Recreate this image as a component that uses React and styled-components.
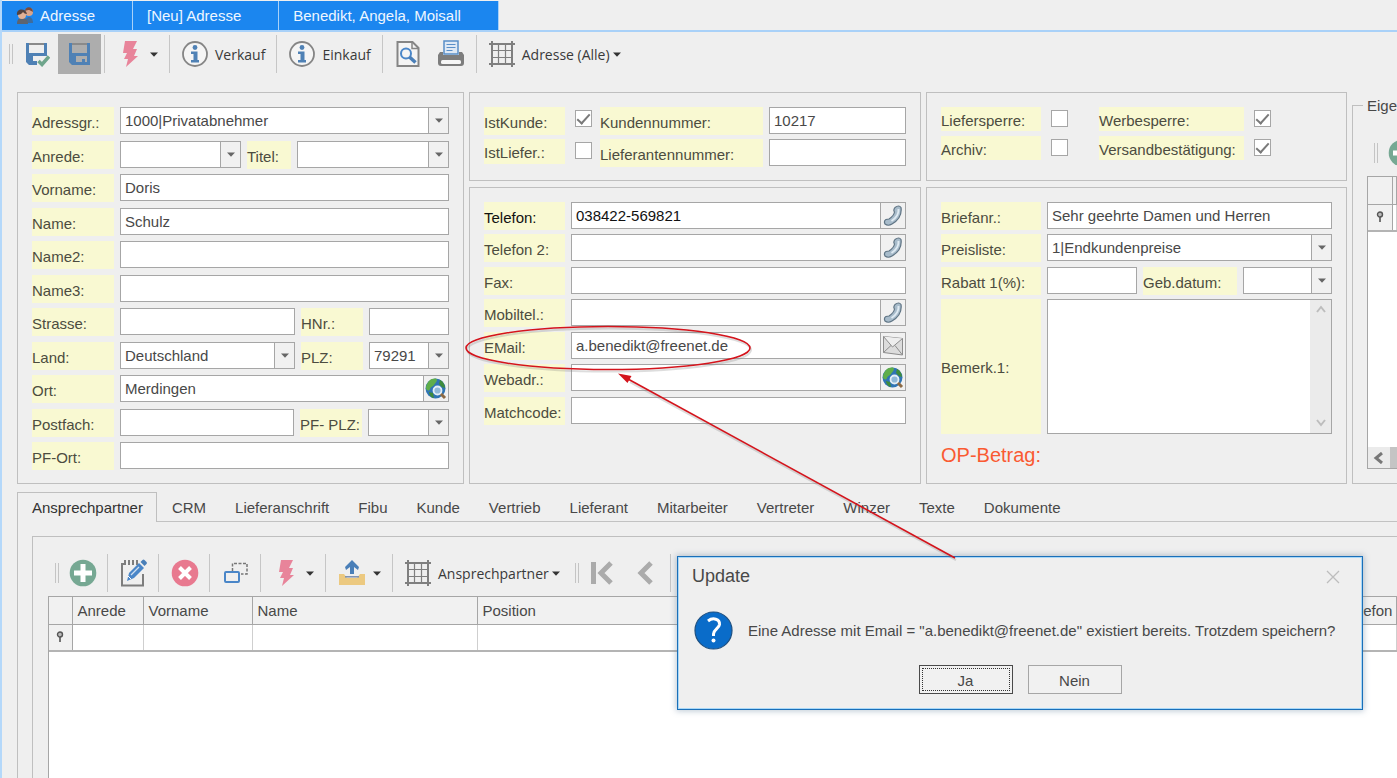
import { useState } from 'react';
import styled, { createGlobalStyle, css } from 'styled-components';

const GlobalStyle = createGlobalStyle`
  * {
    box-sizing: border-box;
  }

  body {
    margin: 0;
    background: #efefef;
    color: #484848;
    font-family: 'Liberation Sans', Arial, sans-serif;
    font-size: 15px;
    overflow: hidden;
  }

  button,
  input,
  select,
  textarea {
    font: inherit;
    color: inherit;
  }
`;

const Page = styled.div`
  position: relative;
  display: flex;
  flex-direction: column;
  min-height: 100vh;
  padding-top: 1px;
  border-left: 2px solid #b4d8fa;
  overflow: hidden;
`;

/* window tabs */

const WindowTabs = styled.nav`
  display: flex;
  gap: 1px;
  height: 31px;
  border-bottom: 2px solid #a9d1f8;
`;

const WindowTab = styled.button`
  display: flex;
  align-items: center;
  gap: 6px;
  padding: 0 37px 0 14px;
  border: 0;
  background: #1b86ef;
  box-shadow: 1px 0 0 #a9d1f8;
  color: #eef6ff;
  white-space: nowrap;
`;

/* toolbars */

const Toolbar = styled.div`
  display: flex;
  align-items: center;
  padding-left: 7px;
  font-family: 'Open Sans', 'Noto Sans', sans-serif;
  font-size: 14px;
  color: #3a3a3a;
`;

const MainToolbar = styled(Toolbar)`
  padding-top: 2px;
  margin-bottom: 18px;
`;

const Grip = styled.span`
  width: 4px;
  height: 20px;
  margin-right: 2px;
  margin-left: ${(props) => (props.$inner ? '7px' : '0')};
  border-left: 1px solid #c4c4c4;
  border-right: 1px solid #c4c4c4;
  flex: none;
`;

const Separator = styled.span`
  width: 1px;
  height: 38px;
  margin: 0 4px 0 3px;
  background: #c6c6c6;
  flex: none;
`;

const ToolButton = styled.button`
  display: flex;
  align-items: center;
  gap: 7px;
  height: 40px;
  padding: 0 8px;
  border: 0;
  background: transparent;
  white-space: nowrap;
  flex: none;
`;

const IconButton = styled(ToolButton)`
  justify-content: center;
  width: 43px;
  padding: 0;
  background: ${(props) => (props.$active ? '#adadad' : 'transparent')};
`;

const MenuText = styled.span`
  display: flex;
  align-items: center;
  gap: 3px;
`;

/* form */

const FormArea = styled.form`
  display: grid;
  grid-template-columns: minmax(0, 447fr) minmax(0, 452fr) minmax(0, 421fr) minmax(0, 45fr);
  column-gap: 5px;
  padding-left: 15px;
`;

const Column = styled.div`
  display: flex;
  flex-direction: column;
  gap: 6px;
`;

const Panel = styled.section`
  padding: 14px;
  border: 1px solid #bfbfbf;
  flex: ${(props) => (props.$grow ? '1' : 'none')};
`;

const Rows = styled.div`
  display: grid;
  grid-template-columns: minmax(0, 1fr);
  grid-template-rows: ${(props) => props.$rows};
`;

const Row = styled.div`
  display: flex;
  align-items: flex-start;
  gap: 6px;
`;

const Label = styled.label`
  display: flex;
  align-items: center;
  width: ${(props) => props.$width}px;
  height: ${(props) => props.$height || 28}px;
  padding-top: 2px;
  margin-left: ${(props) => (props.$apart ? '23px' : '0')};
  background: #f9f9d2;
  color: ${(props) => (props.$strong ? '#111' : '#4c4c40')};
  white-space: nowrap;
  flex: none;
`;

const fieldBox = css`
  height: 27px;
  border: 1px solid #a6a6a6;
  background: #fff;
  min-width: 0;
  flex: ${(props) => (props.$width ? `0 0 ${props.$width}px` : '1')};
`;

const TextField = styled.input`
  ${fieldBox}
  padding: 0 4px;
  border-radius: 0;
  outline: 0;
`;

const Combo = styled.div`
  ${fieldBox}
  position: relative;
  display: flex;
`;

const ComboSelect = styled.select`
  flex: 1;
  min-width: 0;
  padding: 0 21px 0 4px;
  border: 0;
  border-radius: 0;
  background: #fff;
  appearance: none;
  outline: 0;
`;

const ComboArrow = styled.span`
  position: absolute;
  top: 0;
  right: 0;
  bottom: 0;
  display: flex;
  align-items: center;
  justify-content: center;
  width: 20px;
  border-left: 1px solid #a6a6a6;
  background: #f1f1f1;
  pointer-events: none;
`;

const ButtonField = styled.div`
  ${fieldBox}
  display: flex;
  color: ${(props) => (props.$strong ? '#111' : 'inherit')};
`;

const BareInput = styled.input`
  flex: 1;
  min-width: 0;
  padding: 0 4px;
  border: 0;
  background: transparent;
  outline: 0;
`;

const FieldButton = styled.button`
  display: flex;
  align-items: center;
  justify-content: center;
  width: 25px;
  padding: 0;
  border: 0;
  border-left: 1px solid #a6a6a6;
  background: #f1f1f1;
`;

const CheckBox = styled.input.attrs({ type: 'checkbox' })`
  appearance: none;
  display: flex;
  justify-content: center;
  width: 17px;
  height: 17px;
  margin: 3px 2px 0 4px;
  border: 1px solid #a6a6a6;
  background: #fff;
  flex: none;

  &:checked::after {
    content: '';
    width: 5px;
    height: 11px;
    border: solid #7a7a7a;
    border-width: 0 2px 2px 0;
    transform: rotate(42deg);
  }
`;

const MemoBox = styled.div`
  display: flex;
  flex: 1;
  height: 135px;
  border: 1px solid #a6a6a6;
  background: #fff;
`;

const MemoText = styled.textarea`
  flex: 1;
  min-width: 0;
  padding: 4px;
  border: 0;
  outline: 0;
  resize: none;
`;

const MemoScroll = styled.div`
  display: flex;
  flex-direction: column;
  justify-content: space-between;
  align-items: center;
  width: 21px;
  padding: 4px 0;
  background: #ebebeb;
`;

const OpenAmount = styled.p`
  margin: 9px 0 0;
  color: #fa5a32;
  font-size: 20px;
  line-height: 24px;
`;

/* clipped group on the right */

const Group = styled.fieldset`
  display: flex;
  flex-direction: column;
  min-width: 0;
  margin: 5px 0 0;
  padding: 0 0 14px 14px;
  border: 1px solid #bfbfbf;
  border-right: 0;
  overflow: hidden;
`;

const GroupTitle = styled.legend`
  margin-left: -4px;
  padding: 0 0 0 4px;
  line-height: 17px;
`;

const GroupToolbar = styled(Toolbar)`
  margin: 19px 0 3px;
`;

const GroupGrid = styled.div`
  display: flex;
  flex-direction: column;
  flex: 1;
  border: 1px solid #a6a6a6;
  border-right: 0;
  background: #fff;
`;

const ScrollBar = styled.div`
  display: flex;
  height: 21px;
  margin-top: auto;
  background: #c4c4c4;
`;

const ScrollArrow = styled.span`
  display: flex;
  align-items: center;
  justify-content: center;
  width: 22px;
  background: #ebebeb;
`;

/* lower part */

const TabStrip = styled.div`
  display: flex;
  height: 30px;
  margin: 8px 0 0 15px;
  border-bottom: 1px solid #c2c2c2;
`;

const Tab = styled.button`
  padding: 0 13px 0 14px;
  margin-bottom: -1px;
  border: 1px solid transparent;
  border-bottom: 0;
  background: transparent;
  white-space: nowrap;
  flex: none;

  ${(props) =>
    props.$active &&
    css`
      border-color: #bfbfbf;
      background: #efefef;
      color: #333;
    `}
`;

const TabBody = styled.div`
  display: flex;
  flex: 1;
  margin-left: 15px;
  padding: 14px 0 0 14px;
  border-left: 1px solid #bfbfbf;
`;

const ListPanel = styled.section`
  display: flex;
  flex-direction: column;
  flex: 1;
  min-width: 0;
  padding: 16px 0 0 15px;
  border: 1px solid #bfbfbf;
  border-width: 1px 0 0 1px;
`;

const GridArea = styled.div`
  flex: 1;
  margin-top: 3px;
  border: 1px solid #a6a6a6;
  border-width: 1px 0 0 1px;
  background: #fff;
`;

const Grid = styled.table`
  width: 100%;
  border-collapse: collapse;
  table-layout: fixed;

  th,
  td {
    height: 27px;
    padding: 0 5px;
    text-align: left;
    font-weight: normal;
    white-space: nowrap;
  }

  thead th {
    border-right: 1px solid #a6a6a6;
    border-bottom: 1px solid #a6a6a6;
    background: #f1f1f1;
  }

  tbody td {
    border-right: 1px solid #cfcfcf;
    border-bottom: 2px solid #b4b4b4;
  }

  tbody th {
    padding: 0;
    border-right: 1px solid #a6a6a6;
    border-bottom: 2px solid #b4b4b4;
    background: #f1f1f1;
    text-align: center;
  }

  tbody svg {
    display: block;
    margin: 0 auto;
  }
`;

/* message box */

const Dialog = styled.div`
  position: absolute;
  top: 556px;
  right: 34px;
  display: flex;
  flex-direction: column;
  width: 686px;
  padding: 0 14px 15px;
  border: 1px solid #1a6fb8;
  background: #efefef;
  box-shadow: inset 0 0 0 1px #a8d8f8, 0 0 6px 1px rgba(90, 120, 150, 0.4);
`;

const DialogHead = styled.header`
  display: flex;
  align-items: center;
  justify-content: space-between;
  height: 39px;
`;

const DialogTitle = styled.h2`
  margin: 0;
  font-size: 18px;
  font-weight: normal;
`;

const CloseButton = styled.button`
  display: flex;
  padding: 0 8px;
  border: 0;
  background: transparent;
`;

const DialogText = styled.div`
  display: flex;
  align-items: center;
  gap: 15px;
  height: 69px;
  padding-left: 2px;
  white-space: nowrap;
`;

const DialogButtons = styled.div`
  display: flex;
  justify-content: center;
  gap: 15px;
`;

const DialogButton = styled.button`
  width: 94px;
  height: 29px;
  padding: 2px 0 0;
  border: 1px solid ${(props) => (props.$focused ? '#4a4a4a' : '#a6a6a6')};
  background: #f1f1f1;
  outline: ${(props) => (props.$focused ? '1px dotted #333' : '0')};
  outline-offset: -4px;
`;

const Marks = styled.svg`
  position: absolute;
  top: 0;
  left: -2px;
  pointer-events: none;
`;

/* icons */

function Caret({ color = '#333' }) {
    return (
        <svg width="8" height="5" viewBox="0 0 8 5">
            <path d="M0 0.500h8L4 4.800z" fill={color} />
        </svg>
    );
}

function Chevron({ dir }) {
    const paths = {
        up: 'M2 8l4-5 4 5',
        down: 'M2 3l4 5 4-5',
        left: 'M9 1L3 6l6 5',
    };
    return (
        <svg width="12" height="12" viewBox="0 0 12 12" fill="none">
            <path d={paths[dir]} stroke={dir === 'left' ? '#777' : '#bdbdbd'} strokeWidth={dir === 'left' ? 3 : 2} />
        </svg>
    );
}

function PeopleIcon() {
    return (
        <svg width="18" height="18" viewBox="0 0 18 18">
            <path d="M9 16c0-4 2-6 4-6s4 2 4 6z" fill="#3f6c9c" />
            <circle cx="13" cy="5" r="4" fill="#d9a58c" />
            <path d="M9 4c0-5 8-5 8 1-2-1-3-2-4-2s-2 0-4 1z" fill="#7a4a3a" />
            <path d="M1 17c0-5 2-6 5-6s6 1 6 6z" fill="#5d6470" />
            <circle cx="6" cy="8" r="4" fill="#e2b196" />
            <path d="M1 8c-1-7 9-7 10-1-2 0-3-1-4-2-1 2-4 3-6 3z" fill="#54423f" />
        </svg>
    );
}

function SaveIcon({ checked }) {
    return (
        <svg width="26" height="26" viewBox="0 0 26 26">
            <path d="M2 2h3v10h15V2h3v13H9v9H5l-3-3z" fill="#4f81b5" />
            <path d="M5 3h15" stroke="#8a8a8a" strokeWidth="2" />
            {checked ? (
                <>
                    <path d="M9 20h4v4H9z" fill="#4f81b5" />
                    <path d="M14.500 20l3.500 3.500 7-8" stroke="#6fa58c" strokeWidth="3.500" fill="none" />
                </>
            ) : (
                <path d="M20 14h3v10H9v-3h6v-3h3v3h2z" fill="#4f81b5" />
            )}
        </svg>
    );
}

function FlashIcon() {
    return (
        <svg width="26" height="28" viewBox="0 0 26 28">
            <path d="M8 1h12l-4 8h4l-3 7h4L9 27l2-8H7l3-6H6z" fill="#e8849a" />
        </svg>
    );
}

function InfoIcon() {
    return (
        <svg width="26" height="26" viewBox="0 0 26 26">
            <circle cx="13" cy="13" r="12" fill="#f5f5f5" stroke="#858585" strokeWidth="1.800" />
            <circle cx="13" cy="6.500" r="2.400" fill="#4f81b5" />
            <path d="M9 10.500h6.500V19H17v2.500H9V19h2.500v-6H9z" fill="#4f81b5" />
        </svg>
    );
}

function PreviewIcon() {
    return (
        <svg width="26" height="28" viewBox="0 0 26 28" fill="none">
            <path d="M2.500 2h15l6 6v18h-21z" fill="#f4f4f4" stroke="#858585" strokeWidth="2" />
            <path d="M17 2v6.500h6" stroke="#858585" strokeWidth="1.500" />
            <circle cx="11" cy="13.500" r="5" stroke="#4a86c8" strokeWidth="2" />
            <path d="M14.500 17l6 5.500" stroke="#4a7fb8" strokeWidth="3.500" />
        </svg>
    );
}

function PrinterIcon() {
    return (
        <svg width="28" height="28" viewBox="0 0 28 28">
            <path d="M7 1h14v13H7z" fill="#dfe9f5" stroke="#5a8fc8" strokeWidth="1.500" />
            <path d="M9.500 4.500h9M9.500 7.500h9M9.500 10.500h6" stroke="#5a8fc8" strokeWidth="1.200" />
            <path d="M3 12h3v3h16v-3h3l2 3v8q0 3-3 3H4q-3 0-3-3v-8z" fill="#7d7d7d" />
            <rect x="4" y="20" width="20" height="4" rx="1.500" fill="#f6f6f6" />
        </svg>
    );
}

function GridIcon() {
    return (
        <svg width="26" height="28" viewBox="0 0 26 28" fill="none" stroke="#7f7f7f">
            <path d="M3 1v26M23 1v26M0 4h26M0 24h26" strokeWidth="2" />
            <path d="M9.500 4v20M16.500 4v20M3 10.500h20M3 17.500h20" strokeWidth="1.200" />
        </svg>
    );
}

function RoundIcon({ kind }) {
    const add = kind === 'add';
    return (
        <svg width="28" height="28" viewBox="0 0 28 28">
            <circle cx="14" cy="14" r="13.300" fill={add ? '#76a893' : '#e8798f'} />
            {add ? (
                <path d="M14 5v18M5 14h18" stroke="#fff" strokeWidth="5" />
            ) : (
                <path d="M8.500 8.500l11 11M19.500 8.500l-11 11" stroke="#fff" strokeWidth="4" />
            )}
        </svg>
    );
}

function EditIcon() {
    return (
        <svg width="28" height="28" viewBox="0 0 28 28" fill="none">
            <path d="M5 5H2v21.500h21V15" stroke="#7d7d7d" strokeWidth="2" />
            <path d="M5 1v5M9 1v5M13 1v5M17 1v5" stroke="#7d7d7d" strokeWidth="2" />
            <path d="M9 14L19 4l5 5-10 10-7 3z" fill="#4a86c8" />
            <path d="M20.500 3l2-2q1-1 2 0l2 2q1 1 0 2l-2 2z" fill="#4a7fb8" />
            <path d="M11 16l8-8" stroke="#cfe0f2" strokeWidth="1.300" />
            <path d="M8 17l3 3" stroke="#fff" strokeWidth="1" />
        </svg>
    );
}

function CopyIcon() {
    return (
        <svg width="26" height="24" viewBox="0 0 26 24" fill="none">
            <path d="M9.500 10V2.500H24V13h-6" stroke="#777" strokeWidth="1.500" strokeDasharray="3 1.500" />
            <rect x="2" y="11" width="14" height="10" rx="1" stroke="#4a86c8" strokeWidth="2" />
        </svg>
    );
}

function UploadIcon() {
    return (
        <svg width="28" height="28" viewBox="0 0 28 28">
            <path d="M1 15h5l3 4h10l3-4h5v11H1z" fill="#ecc980" />
            <path d="M14 1l7 7-1 3-4-3v7h-4V8l-4 3-1-3z" fill="#4a7fb8" />
            <path d="M7 17.800h14" stroke="#7c8fae" strokeWidth="1.500" />
        </svg>
    );
}

function FirstIcon() {
    return (
        <svg width="24" height="24" viewBox="0 0 24 24" fill="none" stroke="#ababab">
            <path d="M3.500 1v22" strokeWidth="5" />
            <path d="M21 2L11 12l10 10" strokeWidth="5" />
        </svg>
    );
}

function PrevIcon() {
    return (
        <svg width="24" height="24" viewBox="0 0 24 24" fill="none" stroke="#ababab">
            <path d="M18 2L8 12l10 10" strokeWidth="5" />
        </svg>
    );
}

function PhoneIcon() {
    return (
        <svg width="20" height="22" viewBox="0 0 20 22" fill="none">
            <path
                d="M12 2.500q4-3 6 0c1 7-3 13-9 16.500q-4 2.500-7 0-1.500-3 1-4.500l3-.5c3-2 5-4 5.500-7q-1.500-2 .5-4.500z"
                fill="#a8bccb"
                stroke="#5f7484"
                strokeWidth="1.200"
            />
            <path d="M15.500 4c.5 4-2 9-7 12" stroke="#dfeaf2" strokeWidth="2" />
        </svg>
    );
}

function MailIcon() {
    return (
        <svg width="22" height="22" viewBox="0 0 22 22" fill="none" stroke="#8d8d8d">
            <path d="M1.500 1.500l19 2v16.500l-19-2.500z" fill="#dcdcdc" />
            <path d="M1.500 1.500l9 10.500 10-8.500" fill="#eee" />
            <path d="M1.500 17.500L9 10.500M20.500 20L13 10.500" />
        </svg>
    );
}

function GlobeIcon() {
    return (
        <svg width="22" height="22" viewBox="0 0 22 22">
            <circle cx="10.500" cy="10.500" r="10" fill="#2f74b4" />
            <path d="M4 3c3-3 8-3 8-1s-2 3-3 5-3 1-4 4-4 1-4-1 1-5 3-7z" fill="#5fae4a" />
            <path d="M15 2c3 1 5 5 5 8l-3-1-3-3zM4 14l4 1 1 5c-2 0-5-3-5-6z" fill="#3f8c3c" />
            <path d="M15 15l5 5" stroke="#8c6a45" strokeWidth="3" />
            <circle cx="12.500" cy="12.500" r="4" fill="#8fb8d8" stroke="#e3eef6" strokeWidth="1.800" />
        </svg>
    );
}

function FilterPin() {
    return (
        <svg width="8" height="12" viewBox="0 0 8 12" fill="none">
            <circle cx="4" cy="3.500" r="2.500" fill="#bbb" stroke="#555" strokeWidth="1.400" />
            <path d="M4 6v5" stroke="#555" strokeWidth="1.600" />
        </svg>
    );
}

function QuestionIcon() {
    return (
        <svg width="39" height="39" viewBox="0 0 39 39" fill="none">
            <circle cx="19.500" cy="19.500" r="18.500" fill="#0a6cc9" stroke="#1d4f80" strokeWidth="1.200" />
            <path d="M14 10c5-4 12-2 11.500 3.500-.5 4-6 5-6 9.500v2" stroke="#fff" strokeWidth="3" />
            <circle cx="19.500" cy="29.500" r="2" fill="#fff" />
        </svg>
    );
}

/* form parts */

function Dropdown({ id, value, width }) {
    return (
        <Combo $width={width}>
            <ComboSelect id={id} defaultValue={value}>
                <option>{value}</option>
            </ComboSelect>
            <ComboArrow>
                <Caret color="#666" />
            </ComboArrow>
        </Combo>
    );
}

function ActionField({ id, value, strong, title, icon }) {
    return (
        <ButtonField $strong={strong}>
            <BareInput id={id} defaultValue={value} />
            <FieldButton type="button" aria-label={title}>
                {icon}
            </FieldButton>
        </ButtonField>
    );
}

function AddressPanel() {
    return (
        <Panel>
            <Rows $rows="repeat(5, 34px 33px) 27px">
                <Row>
                    <Label $width={82} htmlFor="gruppe">Adressgr.:</Label>
                    <Dropdown id="gruppe" value="1000|Privatabnehmer" />
                </Row>
                <Row>
                    <Label $width={82} htmlFor="anrede">Anrede:</Label>
                    <Dropdown id="anrede" value="" width={121} />
                    <Label $width={44} htmlFor="titel">Titel:</Label>
                    <Dropdown id="titel" value="" />
                </Row>
                <Row>
                    <Label $width={82} htmlFor="vorname">Vorname:</Label>
                    <TextField id="vorname" defaultValue="Doris" />
                </Row>
                <Row>
                    <Label $width={82} htmlFor="name">Name:</Label>
                    <TextField id="name" defaultValue="Schulz" />
                </Row>
                <Row>
                    <Label $width={82} htmlFor="name2">Name2:</Label>
                    <TextField id="name2" />
                </Row>
                <Row>
                    <Label $width={82} htmlFor="name3">Name3:</Label>
                    <TextField id="name3" />
                </Row>
                <Row>
                    <Label $width={82} htmlFor="strasse">Strasse:</Label>
                    <TextField id="strasse" $width={175} />
                    <Label $width={62} htmlFor="hnr">HNr.:</Label>
                    <TextField id="hnr" />
                </Row>
                <Row>
                    <Label $width={82} htmlFor="land">Land:</Label>
                    <Dropdown id="land" value="Deutschland" width={175} />
                    <Label $width={62} htmlFor="plz">PLZ:</Label>
                    <Dropdown id="plz" value="79291" />
                </Row>
                <Row>
                    <Label $width={82} htmlFor="ort">Ort:</Label>
                    <ActionField id="ort" value="Merdingen" title="Karte" icon={<GlobeIcon />} />
                </Row>
                <Row>
                    <Label $width={82} htmlFor="postfach">Postfach:</Label>
                    <TextField id="postfach" $width={174} />
                    <Label $width={62} htmlFor="pfplz">PF- PLZ:</Label>
                    <Dropdown id="pfplz" value="" />
                </Row>
                <Row>
                    <Label $width={82} htmlFor="pfort">PF-Ort:</Label>
                    <TextField id="pfort" />
                </Row>
            </Rows>
        </Panel>
    );
}

function ContactColumn() {
    return (
        <Column>
            <Panel>
                <Rows $rows="32px 27px">
                    <Row>
                        <Label $width={81} htmlFor="istkunde">IstKunde:</Label>
                        <CheckBox id="istkunde" defaultChecked />
                        <Label $width={163} htmlFor="kundennr">Kundennummer:</Label>
                        <TextField id="kundennr" defaultValue="10217" />
                    </Row>
                    <Row>
                        <Label $width={81} $height={25} htmlFor="istliefer">IstLiefer.:</Label>
                        <CheckBox id="istliefer" />
                        <Label $width={163} htmlFor="liefernr">Lieferantennummer:</Label>
                        <TextField id="liefernr" />
                    </Row>
                </Rows>
            </Panel>
            <Panel $grow>
                <Rows $rows="repeat(3, 32px 33px) 27px">
                    <Row>
                        <Label $width={81} $strong htmlFor="telefon">Telefon:</Label>
                        <ActionField id="telefon" value="038422-569821" strong title="Anrufen" icon={<PhoneIcon />} />
                    </Row>
                    <Row>
                        <Label $width={81} htmlFor="telefon2">Telefon 2:</Label>
                        <ActionField id="telefon2" title="Anrufen" icon={<PhoneIcon />} />
                    </Row>
                    <Row>
                        <Label $width={81} htmlFor="fax">Fax:</Label>
                        <TextField id="fax" />
                    </Row>
                    <Row>
                        <Label $width={81} htmlFor="mobil">Mobiltel.:</Label>
                        <ActionField id="mobil" title="Anrufen" icon={<PhoneIcon />} />
                    </Row>
                    <Row>
                        <Label $width={81} htmlFor="email">EMail:</Label>
                        <ActionField id="email" value="a.benedikt@freenet.de" title="Mail senden" icon={<MailIcon />} />
                    </Row>
                    <Row>
                        <Label $width={81} htmlFor="web">Webadr.:</Label>
                        <ActionField id="web" title="Webseite" icon={<GlobeIcon />} />
                    </Row>
                    <Row>
                        <Label $width={81} htmlFor="matchcode">Matchcode:</Label>
                        <TextField id="matchcode" />
                    </Row>
                </Rows>
            </Panel>
        </Column>
    );
}

function SettingsColumn() {
    return (
        <Column>
            <Panel>
                <Rows $rows="29px 30px">
                    <Row>
                        <Label $width={100} $height={24} htmlFor="liefersperre">Liefersperre:</Label>
                        <CheckBox id="liefersperre" />
                        <Label $width={145} $height={24} $apart htmlFor="werbesperre">Werbesperre:</Label>
                        <CheckBox id="werbesperre" defaultChecked />
                    </Row>
                    <Row>
                        <Label $width={100} $height={24} htmlFor="archiv">Archiv:</Label>
                        <CheckBox id="archiv" />
                        <Label $width={145} $height={24} $apart htmlFor="versand">Versandbestätigung:</Label>
                        <CheckBox id="versand" defaultChecked />
                    </Row>
                </Rows>
            </Panel>
            <Panel $grow>
                <Rows $rows="32px 33px 32px auto">
                    <Row>
                        <Label $width={100} htmlFor="briefanrede">Briefanr.:</Label>
                        <TextField id="briefanrede" defaultValue="Sehr geehrte Damen und Herren" />
                    </Row>
                    <Row>
                        <Label $width={100} htmlFor="preisliste">Preisliste:</Label>
                        <Dropdown id="preisliste" value="1|Endkundenpreise" />
                    </Row>
                    <Row>
                        <Label $width={100} htmlFor="rabatt">Rabatt 1(%):</Label>
                        <TextField id="rabatt" $width={90} />
                        <Label $width={94} htmlFor="geburt">Geb.datum:</Label>
                        <Dropdown id="geburt" value="" />
                    </Row>
                    <Row>
                        <Label $width={100} $height={135} htmlFor="bemerkung">Bemerk.1:</Label>
                        <MemoBox>
                            <MemoText id="bemerkung" />
                            <MemoScroll>
                                <Chevron dir="up" />
                                <Chevron dir="down" />
                            </MemoScroll>
                        </MemoBox>
                    </Row>
                </Rows>
                <OpenAmount>OP-Betrag:</OpenAmount>
            </Panel>
        </Column>
    );
}

function PropertiesGroup() {
    return (
        <Group>
            <GroupTitle>Eige</GroupTitle>
            <GroupToolbar>
                <Grip />
                <IconButton type="button" aria-label="Hinzufügen">
                    <RoundIcon kind="add" />
                </IconButton>
            </GroupToolbar>
            <GroupGrid>
                <Grid>
                    <colgroup>
                        <col style={{ width: 24 }} />
                        <col />
                    </colgroup>
                    <thead>
                        <tr>
                            <th />
                            <th />
                        </tr>
                    </thead>
                    <tbody>
                        <tr>
                            <th>
                                <FilterPin />
                            </th>
                            <td />
                        </tr>
                    </tbody>
                </Grid>
                <ScrollBar>
                    <ScrollArrow>
                        <Chevron dir="left" />
                    </ScrollArrow>
                </ScrollBar>
            </GroupGrid>
        </Group>
    );
}

const TABS = [
    'Ansprechpartner',
    'CRM',
    'Lieferanschrift',
    'Fibu',
    'Kunde',
    'Vertrieb',
    'Lieferant',
    'Mitarbeiter',
    'Vertreter',
    'Winzer',
    'Texte',
    'Dokumente',
];

const COLUMNS = [
    { title: 'Anrede', width: 71 },
    { title: 'Vorname', width: 109 },
    { title: 'Name', width: 225 },
    { title: 'Position' },
    { title: 'Telefon', width: 58 },
];

function ContactList() {
    return (
        <ListPanel>
            <Toolbar>
                <Grip />
                <IconButton aria-label="Neu">
                    <RoundIcon kind="add" />
                </IconButton>
                <Separator />
                <IconButton aria-label="Bearbeiten">
                    <EditIcon />
                </IconButton>
                <Separator />
                <IconButton aria-label="Löschen">
                    <RoundIcon kind="delete" />
                </IconButton>
                <Separator />
                <IconButton aria-label="Duplizieren">
                    <CopyIcon />
                </IconButton>
                <Separator />
                <ToolButton aria-label="Aktionen">
                    <FlashIcon />
                    <Caret />
                </ToolButton>
                <Separator />
                <ToolButton aria-label="Export">
                    <UploadIcon />
                    <Caret />
                </ToolButton>
                <Separator />
                <ToolButton>
                    <GridIcon />
                    <MenuText>
                        Ansprechpartner
                        <Caret />
                    </MenuText>
                </ToolButton>
                <Grip $inner />
                <IconButton aria-label="Erster">
                    <FirstIcon />
                </IconButton>
                <IconButton aria-label="Vorheriger">
                    <PrevIcon />
                </IconButton>
                <Separator />
            </Toolbar>
            <GridArea>
                <Grid>
                    <colgroup>
                        <col style={{ width: 23 }} />
                        {COLUMNS.map((col) => (
                            <col key={col.title} style={{ width: col.width }} />
                        ))}
                    </colgroup>
                    <thead>
                        <tr>
                            <th />
                            {COLUMNS.map((col) => (
                                <th key={col.title}>{col.title}</th>
                            ))}
                        </tr>
                    </thead>
                    <tbody>
                        <tr>
                            <th>
                                <FilterPin />
                            </th>
                            {COLUMNS.map((col) => (
                                <td key={col.title} />
                            ))}
                        </tr>
                    </tbody>
                </Grid>
            </GridArea>
        </ListPanel>
    );
}

function UpdateDialog({ onClose }) {
    return (
        <Dialog role="dialog" aria-labelledby="dialog-title">
            <DialogHead>
                <DialogTitle id="dialog-title">Update</DialogTitle>
                <CloseButton aria-label="Schließen" onClick={onClose}>
                    <svg width="14" height="14" viewBox="0 0 14 14" stroke="#bdbdbd" strokeWidth="1.300">
                        <path d="M1 1l12 12M13 1L1 13" />
                    </svg>
                </CloseButton>
            </DialogHead>
            <DialogText>
                <QuestionIcon />
                <span>Eine Adresse mit Email = "a.benedikt@freenet.de" existiert bereits. Trotzdem speichern?</span>
            </DialogText>
            <DialogButtons>
                <DialogButton $focused onClick={onClose}>Ja</DialogButton>
                <DialogButton onClick={onClose}>Nein</DialogButton>
            </DialogButtons>
        </Dialog>
    );
}

export default function App() {
    const [tab, setTab] = useState('Ansprechpartner');
    const [dialogOpen, setDialogOpen] = useState(true);

    const closeDialog = () => setDialogOpen(false);

    return (
        <Page>
            <GlobalStyle />
            <WindowTabs>
                <WindowTab>
                    <PeopleIcon />
                    Adresse
                </WindowTab>
                <WindowTab>[Neu] Adresse</WindowTab>
                <WindowTab>Benedikt, Angela, Moisall</WindowTab>
            </WindowTabs>
            <MainToolbar>
                <Grip />
                <IconButton aria-label="Speichern und schließen">
                    <SaveIcon checked />
                </IconButton>
                <IconButton $active aria-label="Speichern">
                    <SaveIcon />
                </IconButton>
                <Separator />
                <ToolButton aria-label="Aktionen">
                    <FlashIcon />
                    <Caret />
                </ToolButton>
                <Separator />
                <ToolButton>
                    <InfoIcon />
                    Verkauf
                </ToolButton>
                <Separator />
                <ToolButton>
                    <InfoIcon />
                    Einkauf
                </ToolButton>
                <Separator />
                <IconButton aria-label="Vorschau">
                    <PreviewIcon />
                </IconButton>
                <IconButton aria-label="Drucken">
                    <PrinterIcon />
                </IconButton>
                <Separator />
                <ToolButton>
                    <GridIcon />
                    <MenuText>
                        Adresse (Alle)
                        <Caret />
                    </MenuText>
                </ToolButton>
            </MainToolbar>
            <FormArea>
                <AddressPanel />
                <ContactColumn />
                <SettingsColumn />
                <PropertiesGroup />
            </FormArea>
            <TabStrip role="tablist">
                {TABS.map((name) => (
                    <Tab key={name} role="tab" $active={name === tab} onClick={() => setTab(name)}>
                        {name}
                    </Tab>
                ))}
            </TabStrip>
            <TabBody>
                <ContactList />
            </TabBody>
            {dialogOpen && <UpdateDialog onClose={closeDialog} />}
            <Marks width="1000" height="600" viewBox="0 0 1000 600" fill="none">
                <g stroke="#777" strokeOpacity="0.25" strokeWidth="2" transform="translate(1 2)">
                    <ellipse cx="608" cy="348" rx="142" ry="21.500" />
                    <path d="M629 380L955 558" />
                </g>
                <ellipse cx="608" cy="348" rx="142" ry="21.500" stroke="#d4141c" strokeWidth="1.600" />
                <path d="M628 379L955 558" stroke="#d4141c" strokeWidth="1.600" />
                <path d="M618 373.500l13.500 2.500-4 7z" fill="#d4141c" />
            </Marks>
        </Page>
    );
}
